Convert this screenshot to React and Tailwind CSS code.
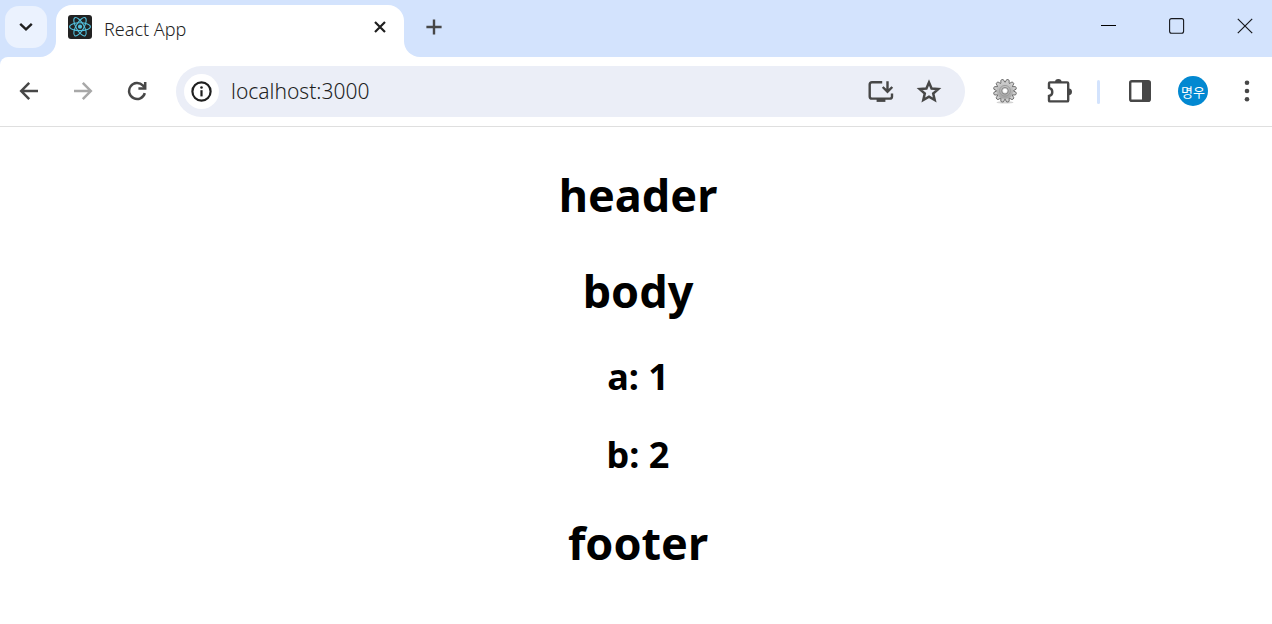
import React from 'react';

const TEETH = Array.from({ length: 12 }, (_, i) => i * 30 + 15);

function ReactLogo() {
  return (
    <svg width="24" height="24" viewBox="0 0 24 24" aria-hidden="true">
      <rect width="24" height="24" rx="3" fill="#222222" />
      <g fill="none" stroke="#53c1de" strokeWidth="1.1">
        <ellipse cx="12" cy="11.7" rx="10.4" ry="3.9" />
        <ellipse cx="12" cy="11.7" rx="10.4" ry="3.9" transform="rotate(60 12 11.7)" />
        <ellipse cx="12" cy="11.7" rx="10.4" ry="3.9" transform="rotate(120 12 11.7)" />
      </g>
      <circle cx="12" cy="11.7" r="2.1" fill="#53c1de" />
    </svg>
  );
}

function GearIcon() {
  return (
    <svg width="24" height="26" viewBox="0 0 24 26" aria-hidden="true">
      <defs>
        <linearGradient id="gear" x1="0" y1="0" x2="0" y2="24" gradientUnits="userSpaceOnUse">
          <stop offset="0" stopColor="#d6d6d6" />
          <stop offset="1" stopColor="#9c9c9c" />
        </linearGradient>
      </defs>
      <ellipse cx="12" cy="24.4" rx="8.5" ry="1.2" fill="#d4d4d4" />
      {TEETH.map((angle) => (
        <path
          key={angle}
          d="M9.8 5 L10.7 1.6 Q12 0.8 13.3 1.6 L14.2 5"
          transform={`rotate(${angle} 12 12.8)`}
          fill="url(#gear)"
          stroke="#6c6c6c"
          strokeWidth="0.9"
        />
      ))}
      <circle cx="12" cy="12.8" r="8.3" fill="url(#gear)" />
      <circle cx="12" cy="12.8" r="5.4" fill="none" stroke="#999999" strokeWidth="0.9" />
      <circle cx="12" cy="12.8" r="3.3" fill="#d8d8d8" stroke="#7c7c7c" strokeWidth="0.9" />
      <circle cx="12" cy="12.8" r="2" fill="#ffffff" />
    </svg>
  );
}

function TabStrip() {
  return (
    <div className="flex h-[57px] bg-white">
      <div className="w-14 shrink-0 rounded-br-2xl bg-[#d3e3fd] pt-1.5 pl-[5px]">
        <button aria-label="Search tabs" className="flex size-[42px] items-center justify-center rounded-[14px] bg-[#ebf2fe]">
          <svg width="14" height="10" viewBox="0 0 14 10" fill="none" stroke="#1f1f1f" strokeWidth="2.4" aria-hidden="true">
            <path d="M1.2 1.8 7 7.4 12.8 1.8" />
          </svg>
        </button>
      </div>
      <div className="w-[348px] shrink-0 bg-[#d3e3fd] pt-[5px]">
        <div className="flex h-full items-start rounded-t-2xl bg-white pt-2.5 pr-3 pl-3">
          <ReactLogo />
          <span className="ml-3 flex-1 font-['Noto_Sans','Open_Sans',sans-serif] text-lg leading-7 font-light text-[#1f1f1f]">React App</span>
          <button aria-label="Close tab" className="flex size-6 items-center justify-center">
            <svg width="12" height="12" viewBox="0 0 12 12" fill="none" stroke="#1f1f1f" strokeWidth="2.2" aria-hidden="true">
              <path d="M1 1 11 11M11 1 1 11" />
            </svg>
          </button>
        </div>
      </div>
      <div className="flex flex-1 items-start justify-between rounded-bl-2xl bg-[#d3e3fd] pl-[9px]">
        <button aria-label="New tab" className="flex h-[54px] w-[42px] items-center justify-center">
          <svg width="16" height="16" viewBox="0 0 16 16" fill="none" stroke="#474747" strokeWidth="2.4" aria-hidden="true">
            <path d="M8 0.4V15.6M0.4 8H15.6" />
          </svg>
        </button>
        <div className="flex gap-3.5">
          <button aria-label="Minimize" className="flex h-[52px] w-[54px] items-center justify-center">
            <svg width="16" height="16" viewBox="0 0 16 16" aria-hidden="true">
              <path d="M0 7.5H15" stroke="#000000" strokeWidth="1" />
            </svg>
          </button>
          <button aria-label="Maximize" className="flex h-[52px] w-[54px] items-center justify-center">
            <svg width="16" height="16" viewBox="0 0 16 16" aria-hidden="true">
              <rect x="0.6" y="0.6" width="14" height="14.6" rx="2" fill="none" stroke="#16181d" strokeWidth="1.1" />
            </svg>
          </button>
          <button aria-label="Close window" className="flex h-[52px] w-[54px] items-center justify-center">
            <svg width="16" height="16" viewBox="0 0 16 16" aria-hidden="true">
              <path d="M0.8 0.8 15.2 15.2M15.2 0.8 0.8 15.2" stroke="#16181d" strokeWidth="1.2" />
            </svg>
          </button>
        </div>
      </div>
    </div>
  );
}

function AddressBar() {
  return (
    <form className="ml-3 flex h-[51px] flex-1 items-center rounded-full bg-[#ebeef7] pr-3 pl-2" onSubmit={(e) => e.preventDefault()}>
      <button type="button" aria-label="View site information" className="flex size-[35px] items-center justify-center rounded-full bg-white">
        <svg width="21" height="21" viewBox="0 0 21 21" aria-hidden="true">
          <circle cx="10.5" cy="10.5" r="9.1" fill="none" stroke="#1f1f1f" strokeWidth="2.2" />
          <path d="M10.5 9.2V15.4" stroke="#1f1f1f" strokeWidth="2.2" />
          <circle cx="10.5" cy="6.5" r="1.3" fill="#1f1f1f" />
        </svg>
      </button>
      <input
        aria-label="Address"
        defaultValue="localhost:3000"
        className="ml-3 min-w-0 flex-1 bg-transparent font-['Noto_Sans','Open_Sans',sans-serif] text-[21px] font-light text-[#1f1f1f] outline-none"
      />
      <button type="button" aria-label="Install app" className="flex h-[50px] w-12 items-center justify-center self-start">
        <svg width="26" height="24" viewBox="0 0 26 24" fill="none" stroke="#474747" strokeWidth="2.4" aria-hidden="true">
          <path d="M14.2 3.3H4Q1.7 3.3 1.7 5.5V17.4Q1.7 19.6 4 19.6H21.8Q24 19.6 24 17.4V14.4" />
          <path d="M8.6 21.2H17.4" strokeWidth="3.4" />
          <path d="M19.5 2.2V12.4M14.7 8 19.5 12.7 24.3 8" />
        </svg>
      </button>
      <button type="button" aria-label="Bookmark this page" className="flex h-[50px] w-12 items-center justify-center self-start">
        <svg width="26" height="26" viewBox="0 0 26 26" fill="none" stroke="#474747" strokeWidth="2.5" aria-hidden="true">
          <path d="M13 4.4 15.6 10.5 22.3 11.1 17.2 15.5 18.7 22 13 18.6 7.3 22 8.8 15.5 3.7 11.1 10.4 10.5Z" />
        </svg>
      </button>
    </form>
  );
}

function Toolbar() {
  return (
    <div className="bg-[#d3e3fd]">
      <div className="flex items-start rounded-tl-lg border-b border-[#dfdfdf] bg-white py-[9px] pl-0.5">
        <button aria-label="Back" className="flex h-[50px] w-[54px] items-center justify-center">
          <svg width="20" height="20" viewBox="0 0 20 20" fill="none" stroke="#474747" strokeWidth="2.5" aria-hidden="true">
            <path d="M19 10H2.6M10.2 1.8 2.2 10 10.2 18.2" />
          </svg>
        </button>
        <button aria-label="Forward" className="flex h-[50px] w-[54px] items-center justify-center">
          <svg width="20" height="20" viewBox="0 0 20 20" fill="none" stroke="#a8a8a8" strokeWidth="2.5" aria-hidden="true">
            <path d="M1 10H17.4M9.8 1.8 17.8 10 9.8 18.2" />
          </svg>
        </button>
        <button aria-label="Reload" className="flex h-[50px] w-[54px] items-center justify-center">
          <svg width="20" height="20" viewBox="0 0 20 20" fill="none" stroke="#474747" strokeWidth="2.5" aria-hidden="true">
            <path d="M17.8 12.2A8 8 0 1 1 15.8 4.4L18.2 7" />
            <path d="M18.2 1V7.4H11.4" />
          </svg>
        </button>
        <AddressBar />
        <button aria-label="Settings extension" className="ml-3 flex h-[50px] w-[54px] items-center justify-center pl-px">
          <GearIcon />
        </button>
        <button aria-label="Extensions" className="flex h-[50px] w-[54px] items-center justify-center pl-1">
          <svg width="26" height="26" viewBox="0 0 26 26" aria-hidden="true">
            <path
              d="M4 4.4H20.2Q21.2 4.4 21.2 5.4V22.4Q21.2 23.4 20.2 23.4H3Q2 23.4 2 22.4V18A4.2 4.2 0 0 0 2 9.8V5.4Q2 4.4 3 4.4Z"
              fill="none"
              stroke="#474747"
              strokeWidth="2.4"
            />
            <path d="M8 4.4A3.3 3.3 0 0 1 14.6 4.4Z" fill="#474747" />
            <path d="M21.6 10.4A3.4 3.4 0 0 1 21.6 17.2Z" fill="#474747" />
          </svg>
        </button>
        <span className="mx-3 h-6 w-[3px] self-center rounded-full bg-[#d3e3fd]" />
        <button aria-label="Side panel" className="flex h-[50px] w-[54px] items-center justify-center pl-px">
          <svg width="22" height="22" viewBox="0 0 22 22" aria-hidden="true">
            <rect x="1.2" y="1.2" width="19.6" height="19.6" rx="1.6" fill="none" stroke="#474747" strokeWidth="2.4" />
            <path d="M13 1H20.5V21H13Z" fill="#474747" />
          </svg>
        </button>
        <button aria-label="Profile" className="flex h-[50px] w-[54px] items-center justify-center">
          <span className="flex size-[30px] items-center justify-center rounded-full bg-[#0288d1] font-['Noto_Sans_CJK_KR',sans-serif] text-[13px] leading-none whitespace-nowrap text-white">
            명우
          </span>
        </button>
        <button aria-label="Menu" className="flex h-[50px] w-[52px] items-center justify-center pl-0.5">
          <svg width="6" height="22" viewBox="0 0 6 22" fill="#474747" aria-hidden="true">
            <circle cx="3" cy="2.7" r="2.3" />
            <circle cx="3" cy="11" r="2.3" />
            <circle cx="3" cy="19.3" r="2.3" />
          </svg>
        </button>
      </div>
    </div>
  );
}

export default function App() {
  return (
    <div className="min-h-screen bg-white">
      <TabStrip />
      <Toolbar />
      <main className="flex flex-col items-center pt-9 pl-1 font-['Noto_Sans','Open_Sans',sans-serif] font-bold text-black">
        <h1 className="mb-8 text-[45px] leading-[64px]">header</h1>
        <h1 className="mb-[30px] text-[45px] leading-[64px]">body</h1>
        <h2 className="mb-[30px] text-4xl leading-[48px]">a: 1</h2>
        <h2 className="mb-8 text-4xl leading-[48px]">b: 2</h2>
        <h1 className="text-[45px] leading-[64px]">footer</h1>
      </main>
    </div>
  );
}
